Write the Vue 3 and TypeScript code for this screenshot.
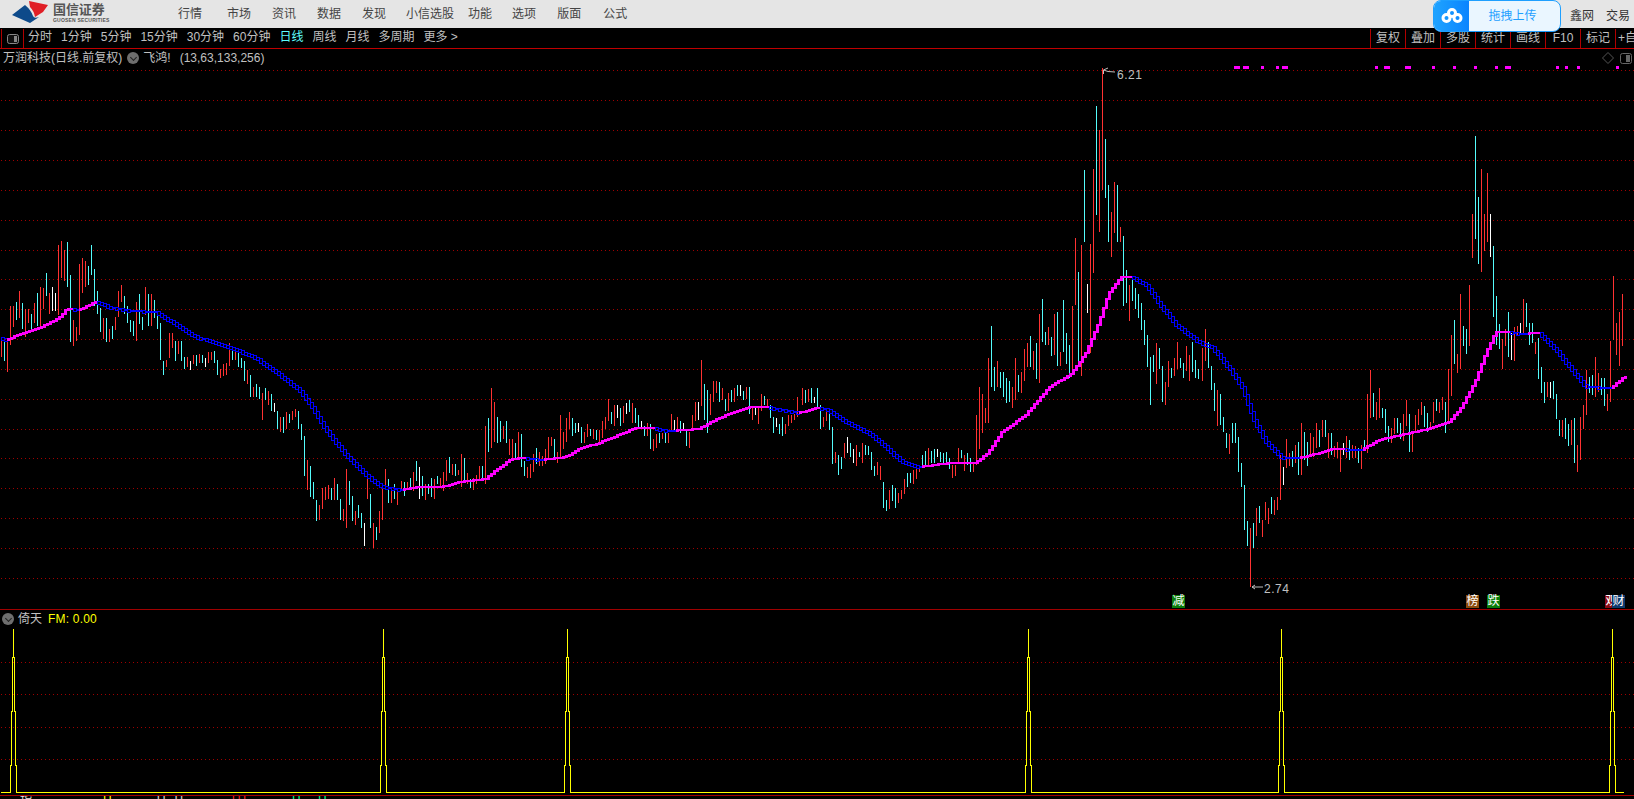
<template>
  <div class="terminal">
    <header class="topbar">
      <div class="logo">
        <svg width="50" height="26" viewBox="0 0 50 26">
          <path d="M29 1L48 5L43 12L35 17Q34 11 30 7Z" fill="#e01f26" />
          <path d="M12 15L25 5Q31 10 33 16Q34 19 39 17L30 23Z" fill="#0d4a8a" />
        </svg>
        <div class="logo-text">
          <span class="logo-cn">国信证券</span>
          <span class="logo-en">GUOSEN SECURITIES</span>
        </div>
      </div>
      <nav class="menu">
        <span v-for="item in menu" :key="item.label" :style="{ marginLeft: item.gap + 'px' }">{{ item.label }}</span>
      </nav>
      <div class="top-right">
        <span>鑫网</span>
        <span>交易</span>
      </div>
      <div class="upload">
        <div class="upload-icon">
          <svg width="24" height="20" viewBox="0 0 24 20" fill="none" stroke="#fff" stroke-width="3">
            <circle cx="12" cy="7" r="3.500" />
            <circle cx="6.500" cy="12" r="3.500" />
            <circle cx="17.500" cy="12" r="3.500" />
          </svg>
        </div>
        <div class="upload-text">拖拽上传</div>
      </div>
    </header>

    <div class="toolbar">
      <div class="side-cell">
        <svg width="12" height="10" viewBox="0 0 12 10">
          <rect x="0.500" y="0.500" width="11" height="9" rx="2" fill="#111" stroke="#888" />
          <rect x="7" y="2" width="3" height="6" fill="#888" />
        </svg>
      </div>
      <div class="periods">
        <span v-for="p in periods" :key="p" :class="{ active: p === '日线' }">{{ p }}</span>
      </div>
      <div class="tools">
        <span v-for="t in tools" :key="t">{{ t }}</span>
      </div>
    </div>

    <section class="main-pane">
      <svg class="chart" width="1634" height="560" viewBox="0 49 1634 560">
        <line v-for="y in mainGrid" :key="y" x1="1" x2="1634" :y1="y + 0.5" :y2="y + 0.5" class="dots" />
        <path :d="barPath.r" stroke="#ff3232" class="bars" />
        <path :d="barPath.c" stroke="#54fcfc" class="bars" />
        <path :d="barPath.w" stroke="#ffffff" class="bars" />
        <rect v-for="(s, i) in maSteps" :key="i" :x="s.x" :y="s.y" :width="s.w" :height="s.h" :fill="s.fill"
          :stroke="s.stroke" class="crisp" />
        <rect v-for="m in marks" :key="m[0]" :x="m[0]" y="66" :width="m[1]" height="3" fill="#ff00ff" />
        <path d="M1103.500 70V74M1103.500 70L1108 68M1103.500 70L1108 71.500L1115 72" class="arrow" />
        <text x="1117" y="79" class="price">6.21</text>
        <path d="M1252 587H1263M1252 587L1255 585M1252 587L1255 589" class="arrow" />
        <text x="1264" y="593" class="price">2.74</text>
      </svg>
      <div class="title-row">
        <span>万润科技(日线.前复权)</span>
        <i class="round-btn title-btn"></i>
        <span>飞鸿!</span>
        <span class="params">(13,63,133,256)</span>
        <div class="corner-icons">
          <svg width="12" height="12" viewBox="0 0 12 12" fill="none" stroke="#555">
            <path d="M6 0.500L11.500 6L6 11.500L0.500 6Z" />
          </svg>
          <svg width="12" height="11" viewBox="0 0 12 11">
            <rect x="0.500" y="0.500" width="11" height="10" rx="2" fill="#000" stroke="#666" />
            <rect x="6" y="2" width="4" height="7" fill="#666" />
          </svg>
        </div>
      </div>
      <div class="badges">
        <span class="badge green first">减</span>
        <span class="badge brown second">榜</span>
        <span class="badge green third">跌</span>
        <span class="badge crimson fourth">观</span>
        <span class="badge navy fifth">财</span>
      </div>
    </section>

    <section class="sub-pane">
      <svg class="chart" width="1634" height="185" viewBox="0 610 1634 185">
        <line v-for="y in subGrid" :key="y" x1="1" x2="1634" :y1="y + 0.5" :y2="y + 0.5" class="dots" />
        <path :d="fmPath" class="fm" />
      </svg>
      <div class="sub-title">
        <i class="round-btn"></i>
        <span class="sub-name">倚天</span>
        <span class="fm-value">FM: 0.00</span>
      </div>
    </section>

    <footer class="status">
      <span class="s-white wide">指</span>
      <span class="s-yellow">H</span>
      <span class="s-white spread">ll ll</span>
      <span class="s-red">lll</span>
      <span class="s-green">H</span>
      <span class="s-green">H</span>
    </footer>
  </div>
</template>

<script setup lang="ts">
import { computed } from 'vue';

const menu = [
  { label: '行情', gap: 0 },
  { label: '市场', gap: 25 },
  { label: '资讯', gap: 21 },
  { label: '数据', gap: 21 },
  { label: '发现', gap: 21 },
  { label: '小信选股', gap: 20 },
  { label: '功能', gap: 14 },
  { label: '选项', gap: 20 },
  { label: '版面', gap: 21 },
  { label: '公式', gap: 22 },
];

const periods = ['分时', '1分钟', '5分钟', '15分钟', '30分钟', '60分钟', '日线', '周线', '月线', '多周期', '更多 >'];
const tools = ['复权', '叠加', '多股', '统计', '画线', 'F10', '标记', '+自'];

const mainGrid = [70, 100, 130, 160, 190, 220, 250, 279, 309, 339, 369, 399, 429, 458, 488, 518, 548, 578];
const subGrid = [662, 694, 727, 759];

const marks: [number, number][] = [
  [1234, 6], [1243, 6], [1261, 3], [1276, 3], [1282, 6], [1375, 3], [1384, 6], [1405, 6], [1432, 3],
  [1453, 3], [1474, 3], [1495, 3], [1505, 6], [1556, 3], [1565, 3], [1577, 3], [1616, 3],
];

// bars read off the chart at 3x: colour, top, bottom. y = base + v / 3
const barSegments = [
  {
    x: 1, base: 220, data: `r355-410 c362-422 r365-455 r258-375 r258-320 c245-300 r212-293 c250-327 r267-352 r267-310
    c282-328 r250-308 c220-318 r202-322 r205-267 c160-228 r220-282 w202-272 w220-272 r75-285 r63-175 r90-182 c67-200
    c165-365 r300-377 r322-363 r132-345 r113-218 r123-200 c138-195 c75-165 c148-258 c213-282 c265-335 r295-358 c295-365
    r328-365 c318-358 r292-330 r213-290 r195-245 c228-282 c258-310 c300-335 c303-348 r245-362 c222-312 c290-330 r202-285
    c222-318 r222-318 c240-293 c278-327 c310-420 c423-465 r420-440 r340-414 r340-385 c363-423 r363-402 c363-422 c412-447
    r412-440 w423-450 r405-432 c405-438 r403-430 c405-430 w415-440 r395-430 r395-420 c393-430 c420-465 r448-473 r432-467
    r430-465 r370-437 c378-420 r392-420 c395-440 c414-445 c423-483 r450-492 c465-530 r500-530 c492-532 c502-538 r518-600
    c505-540 r513-555 c522-573 w550-575 c573-628 r590-635 c590-638 r575-628 c582-608 r573-600 r568-592 c573-627 c612-660
    c648-768 r720-810 c738-830 c785-838 c840-902 r855-900 r805-868 r800-840 r795-838 c805-840 r773-840 c792-840 c837-900
    r868-903 r747-923 c783-855 c828-903 r873-915 c855-893 c878-923 w908-978 r770-838 c822-923 r910-983 c922-960 r873-938
    r805-900 r747-808 c778-850 r802-850 c792-838 r810-855`,
  },
  {
    x: 401, base: 340, data: `r423-450 c425-468 r427-450 c415-447 r397-452 c363-423 w380-477 c408-468 r432-480 c432-462
    c415-470 r418-477 c408-432 r415-445 r396-453 r360-423 c352-400 r372-405 c372-408 r390-405 r342-440 c354-430 r400-432
    c418-444 r415-450 r405-432 r378-418 c378-418 r258-432 c235-337 r145-323 r186-305 c232-308 c243-305 r258-297 c243-308
    r297-345 r297-355 c308-358 r277-360 c282-380 c363-408 r380-413 r372-413 r342-395 c325-372 r336-378 r347-378 r328-372
    r292-358 r292-318 c298-350 r337-368 r225-352 r277-327 r235-305 r217-268 c235-288 c250-280 w250-277 c262-308 r277-308
    r252-290 c268-288 r268-297 c270-300 r270-305 r243-295 r232-268 r178-242 c217-252 r195-258 w195-233 c205-258 r198-248
    w190-222 c180-217 r190-248 c205-250 c226-268 w243-265 c258-288 r250-288 c252-327 r298-332 r282-323 c278-308 r278-297
    c278-308 r278-308 r222-275 w240-272 r232-275 c243-278 w250-272 c268-318 r276-323 r225-272 r186-243 w186-240 r60-198
    c133-240 c150-278 r162-225 r124-186 r124-160 c127-186 r145-180 c178-213 r158-213 c150-186 r145-186 c135-168 w135-168
    c153-180 r142-178 c142-222 r205-240 w202-225 r205-252 r163-212 c168-195 r178-203 c195-233 c232-278 w235-262 c252-282
    c232-288 r252-283 r225-258 r225-248 r222-240 r170-232`,
  },
  {
    x: 802, base: 50, data: `r1015-1065 c1020-1058 r1018-1055 c1015-1060 w1040-1060 c1015-1075 c1065-1138 r1100-1130 r1080-1112
    c1080-1140 c1130-1242 r1205-1240 c1215-1275 c1222-1258 r1180-1225 w1162-1210 c1178-1222 w1197-1240 r1185-1248 c1205-1222
    r1180-1240 c1185-1215 c1188-1215 c1205-1260 c1248-1278 r1235-1275 r1248-1290 c1295-1375 c1350-1382 r1320-1378 c1305-1352
    c1315-1375 r1330-1358 r1320-1348 r1288-1332 c1270-1310 c1270-1298 r1260-1302 r1245-1288 r1250-1265 c1215-1250 c1203-1248
    r1195-1250 c1203-1240 c1198-1240 w1198-1222 c1205-1235 c1210-1240 c1205-1245 c1225-1258 r1245-1283 r1245-1278 r1195-1240
    c1200-1225 r1215-1262 c1210-1245 c1225-1265 r1240-1265 r1095-1245 r1012-1197 r1032-1150 r1075-1118 r925-1118 c828-1010
    c950-1022 r933-1010 c965-1015 c965-1040 c985-1058 c993-1055 r1010-1073 r925-1050 c975-1025 r965-1028 r897-992 r880-950
    c858-950 r903-960 c880-988 r793-1000 c748-875 c847-885 r832-885 c860-918 r793-915 c787-947 r905-947 c750-905 c850-942
    c885-985 r768-968 r565-765 c667-935 r585-978 c360-575 w703-790 r583-910 r358-668 c168-495 r240-545 r55-420 c268-445
    c405-575 r487-620 r395-548 c405-575 r532-575 c558-768 c660-758 r705-812 c685-752 c715-778 c733-803 c760-840 c810-885
    c855-950 c922-1065 c915-965 r880-1002 c895-957 c948-1055 r995-1065 r933-1012 c955-985 r925-978 r877-958 c925-955 c938-985
    r888-962 r915-992 c875-965 c930-985 c958-988`,
  },
  {
    x: 1202, base: 120, data: `r685-782 r628-722 c665-745 c738-810 c790-872 r810-918 c822-915 c890-935 c938-985 r942-1002
    c910-968 c910-968 c950-1055 c1030-1100 c1095-1230 c1203-1277 r1225-1400 c1210-1285 r1165-1248 c1158-1208 r1200-1250
    r1147-1200 r1165-1212 c1132-1182 r1140-1185 r1132-1170 r1005-1140 w1040-1095 r958-1045 r1000-1038 c993-1040 r975-1030
    c967-1065 r910-1065 c936-1020 c965-1038 r938-1010 r950-1010 r908-985 c930-980 r900-950 c900-950 r940-1015 c938-1005
    r978-1012 r965-1015 r988-1055 w968-1005 r948-1015 c960-1020 r975-1015 r978-1015 c985-1028 r975-1047 c960-992 r822-998
    r750-893 c820-892 r845-900 r803-895 c865-895 c867-940 c918-965 r925-968 r893-942 c895-940 c910-958 r883-962 r840-918
    c882-995 r932-995 r885-935 r867-915 r847-885 c858-920 c878-935 r905-930 r847-908 c838-872 r847-878 r832-870 c845-938
    r748-912 r645-828 c600-732 r703-758 r522-748 c618-678 c628-702 r495-678 r282-415 c48-357 c232-432 r148-455 r282-392
    r160-365 w282-410 c377-592 c528-675 c612-687 r657-747 r628-678 c577-712 w640-720 r622-722 r618-645 w610-645 r537-640
    c550-622 c610-675 c610-668 r665-702 c655-777 c740-820 c785-848 r785-832 w785-835 c783-838 c822-898 c900-948 r900-950
    c895-958 c912-978 r900-975 c895-1028 r975-1055 r892-1020 r855-928 r750-885 c770-818 c765-825 r712-830 r760-815 c775-825
    c775-858 r822-872 r662-845 r468-660 r610-705 r577-738 r522-678`,
  },
];

const barPath = computed(() => {
  const out: Record<string, string> = { r: '', c: '', w: '' };
  for (const seg of barSegments) {
    seg.data.trim().split(/\s+/).forEach((token, i) => {
      const [top, bottom] = token.slice(1).split('-').map(Number);
      const x = seg.x + i * 3 + 0.5;
      out[token[0]] += `M${x} ${Math.round(seg.base + top / 3)}V${Math.round(seg.base + bottom / 3)}`;
    });
  }
  return out;
});

const maPoints: [number, number][] = [
  [1, 338], [6, 340], [20, 335], [43, 327], [60, 318], [68, 309], [80, 310], [97, 302], [113, 308], [133, 311], [157, 312],
  [173, 322], [197, 337], [217, 343], [240, 351], [257, 358], [277, 372], [300, 390], [312, 405], [327, 430], [347, 455],
  [367, 475], [383, 487], [400, 490], [420, 487], [443, 487], [460, 482], [487, 479], [500, 468], [513, 459], [523, 458],
  [540, 460], [567, 457], [580, 449], [600, 443], [620, 435], [637, 428], [653, 428], [667, 431], [687, 430], [700, 429],
  [720, 418], [750, 407], [767, 407], [783, 410], [800, 413], [817, 408], [830, 410], [843, 420], [870, 433], [887, 447],
  [903, 462], [920, 467], [950, 463], [977, 463], [990, 452], [1003, 432], [1027, 415], [1050, 388], [1073, 373], [1087, 353],
  [1100, 323], [1110, 293], [1122, 277], [1133, 277], [1147, 285], [1163, 307], [1177, 325], [1200, 342], [1213, 347],
  [1230, 368], [1243, 387], [1255, 420], [1267, 442], [1283, 458], [1300, 458], [1320, 453], [1333, 449], [1363, 450],
  [1380, 440], [1407, 434], [1433, 428], [1450, 422], [1463, 407], [1477, 380], [1487, 353], [1497, 332], [1510, 332],
  [1520, 334], [1540, 333], [1557, 350], [1573, 370], [1587, 387], [1613, 388], [1625, 377],
];

function maAt(x: number): number {
  for (let i = 1; i < maPoints.length; i++) {
    const [x0, y0] = maPoints[i - 1];
    const [x1, y1] = maPoints[i];
    if (x <= x1) return Math.round(y0 + ((y1 - y0) * (x - x0)) / (x1 - x0));
  }
  return maPoints[maPoints.length - 1][1];
}

const maSteps = computed(() => {
  const steps = [];
  let rising = false;
  for (let x = 1; x < 1625; x += 3) {
    const a = maAt(x);
    const b = maAt(x + 3);
    const dy = b - a;
    const top = Math.min(a, b);
    const span = Math.abs(dy);
    if (dy !== 0) rising = dy < 0;
    if (rising) {
      steps.push({ x, y: top - 1, w: 3, h: Math.max(2, span + 2), fill: '#ff00ff', stroke: 'none' });
    } else if (span >= 1) {
      steps.push({ x: x + 0.5, y: top - 0.5, w: 3, h: span + 2, fill: 'none', stroke: '#0000ff' });
    } else {
      steps.push({ x, y: top - 1, w: 3, h: 2, fill: '#0000ff', stroke: 'none' });
    }
  }
  return steps;
});

const spikes = [13, 383, 567, 1028, 1281, 1612];

const fmPath = computed(() => {
  let d = 'M1 792.5';
  for (const s of spikes) {
    const c = s + 0.5;
    d += `H${c - 3}V765H${c - 2}V711H${c - 1}V657H${c}V629V657H${c + 1}V711H${c + 2}V765H${c + 3}V792.5`;
  }
  return d + 'H1624';
});
</script>

<style scoped>
.terminal {
  width: 1634px;
  height: 799px;
  overflow: hidden;
  background: #000;
  display: flex;
  flex-direction: column;
  font-family: "Liberation Sans", "Noto Sans CJK SC", sans-serif;
  font-size: 12px;
  color: #c0c0c0;
}

.topbar {
  height: 28px;
  flex: none;
  background: #e5e5e5;
  color: #444;
  display: flex;
  align-items: center;
  position: relative;
  z-index: 2;
}

.logo {
  width: 178px;
  flex: none;
  display: flex;
  align-items: flex-start;
  height: 28px;
}

.logo-text {
  display: flex;
  flex-direction: column;
  margin-left: 3px;
  color: #555;
}

.logo-cn {
  font-size: 13px;
  font-weight: 700;
  letter-spacing: -0.1px;
  line-height: 14px;
  margin-top: 3px;
}

.logo-en {
  font-size: 5px;
  font-weight: 700;
  line-height: 7px;
  white-space: nowrap;
  letter-spacing: 0.2px;
}

.menu {
  display: flex;
}

.menu span {
  line-height: 28px;
}

.top-right {
  margin-left: auto;
  display: flex;
  gap: 12px;
  padding-right: 4px;
  color: #333;
}

.upload {
  position: absolute;
  left: 1433px;
  top: 0;
  width: 128px;
  height: 32px;
  display: flex;
  border: 1px solid #1e9fff;
  box-sizing: border-box;
  border-radius: 8px;
  overflow: hidden;
  background: #eaf6ff;
}

.upload-icon {
  width: 35px;
  background: linear-gradient(90deg, #1fa3ff, #0a84ff);
  display: flex;
  align-items: center;
  justify-content: center;
}

.upload-text {
  flex: 1;
  text-align: center;
  line-height: 30px;
  padding-right: 4px;
  color: #1e9fff;
}

.toolbar {
  height: 21px;
  flex: none;
  box-sizing: border-box;
  border-bottom: 1px solid #c00000;
  display: flex;
  align-items: stretch;
  padding-left: 1px;
}

.side-cell {
  width: 21px;
  margin-top: 1px;
  border-left: 1px solid #b00000;
  border-right: 1px solid #b00000;
  display: flex;
  align-items: center;
  justify-content: center;
}

.periods {
  display: flex;
  gap: 9px;
  padding-left: 4px;
  line-height: 19px;
}

.periods .active {
  color: #5ffcfc;
}

.tools {
  margin-left: auto;
  display: flex;
  width: 264px;
  flex: none;
  overflow: hidden;
}

.tools span {
  width: 35px;
  flex: none;
  box-sizing: border-box;
  margin-top: 1px;
  border-left: 1px solid #b00000;
  text-align: center;
  line-height: 18px;
  white-space: nowrap;
}

.tools span:last-child {
  text-align: left;
  padding-left: 2px;
}

.main-pane {
  height: 561px;
  flex: none;
  box-sizing: border-box;
  border-bottom: 1px solid #a00000;
  position: relative;
}

.chart {
  display: block;
}

.dots {
  stroke: #a00000;
  stroke-width: 1;
  stroke-dasharray: 1 3;
  shape-rendering: crispEdges;
}

.bars {
  stroke-width: 1;
  fill: none;
  shape-rendering: crispEdges;
}

.crisp {
  shape-rendering: crispEdges;
}

.arrow {
  fill: none;
  stroke: #c0c0c0;
  stroke-width: 1;
}

.price {
  fill: #c0c0c0;
  font-size: 12px;
  letter-spacing: 0.5px;
  font-family: "Liberation Sans", sans-serif;
}

.title-row {
  position: absolute;
  left: 3px;
  right: 2px;
  top: 0;
  height: 18px;
  display: flex;
  align-items: center;
  line-height: 18px;
}

.title-btn {
  margin: 0 4px 0 5px;
}

.round-btn {
  width: 12px;
  height: 12px;
  border-radius: 50%;
  background: #6e6e6e;
  flex: none;
  position: relative;
}

.round-btn::after {
  content: "";
  position: absolute;
  left: 3.5px;
  top: 2.500px;
  width: 4px;
  height: 4px;
  border-right: 1px solid #222;
  border-bottom: 1px solid #222;
  transform: rotate(45deg);
}

.params {
  margin-left: 9px;
}

.corner-icons {
  margin-left: auto;
  display: flex;
  align-items: center;
  gap: 6px;
}

.badges {
  position: absolute;
  left: 0;
  right: 0;
  bottom: 1px;
  height: 13px;
}

.badge {
  position: absolute;
  top: 0;
  width: 13px;
  height: 13px;
  line-height: 13px;
  text-align: center;
  color: #fff;
  font-size: 12px;
}

.green {
  background: #0a7d0a;
}

.brown {
  background: #8a4a0c;
}

.crimson {
  background: #8a0a14;
}

.navy {
  background: #0e3a6e;
}

.first {
  left: 1172px;
}

.second {
  left: 1466px;
}

.third {
  left: 1487px;
}

.fourth {
  left: 1605px;
}

.fifth {
  left: 1612px;
}

.sub-pane {
  height: 186px;
  flex: none;
  box-sizing: border-box;
  border-bottom: 1px solid #a00000;
  position: relative;
}

.fm {
  fill: none;
  stroke: #ffff00;
  stroke-width: 1;
  shape-rendering: crispEdges;
}

.sub-title {
  position: absolute;
  left: 2px;
  top: 0;
  height: 16px;
  margin-top: 1px;
  display: flex;
  align-items: center;
  line-height: 16px;
}

.sub-name {
  margin-left: 4px;
}

.fm-value {
  margin-left: 6px;
  color: #ffff00;
  letter-spacing: 0.2px;
}

.status {
  height: 3px;
  overflow: hidden;
  display: flex;
  font-size: 12px;
  line-height: 12px;
  padding-left: 20px;
}

.status span {
  display: block;
  flex: none;
  margin-top: -1px;
}

.wide {
  width: 83px;
}

.spread {
  width: 75px;
  letter-spacing: 3px;
}

.s-white {
  color: #e0e0e0;
}

.s-yellow {
  color: #ffff00;
  width: 54px;
}

.s-red {
  color: #ff2020;
  width: 60px;
  letter-spacing: 3px;
}

.s-green {
  color: #00ff90;
  width: 26px;
}
</style>

<style>
html,
body {
  margin: 0;
  background: #000;
  overflow: hidden;
}
</style>
